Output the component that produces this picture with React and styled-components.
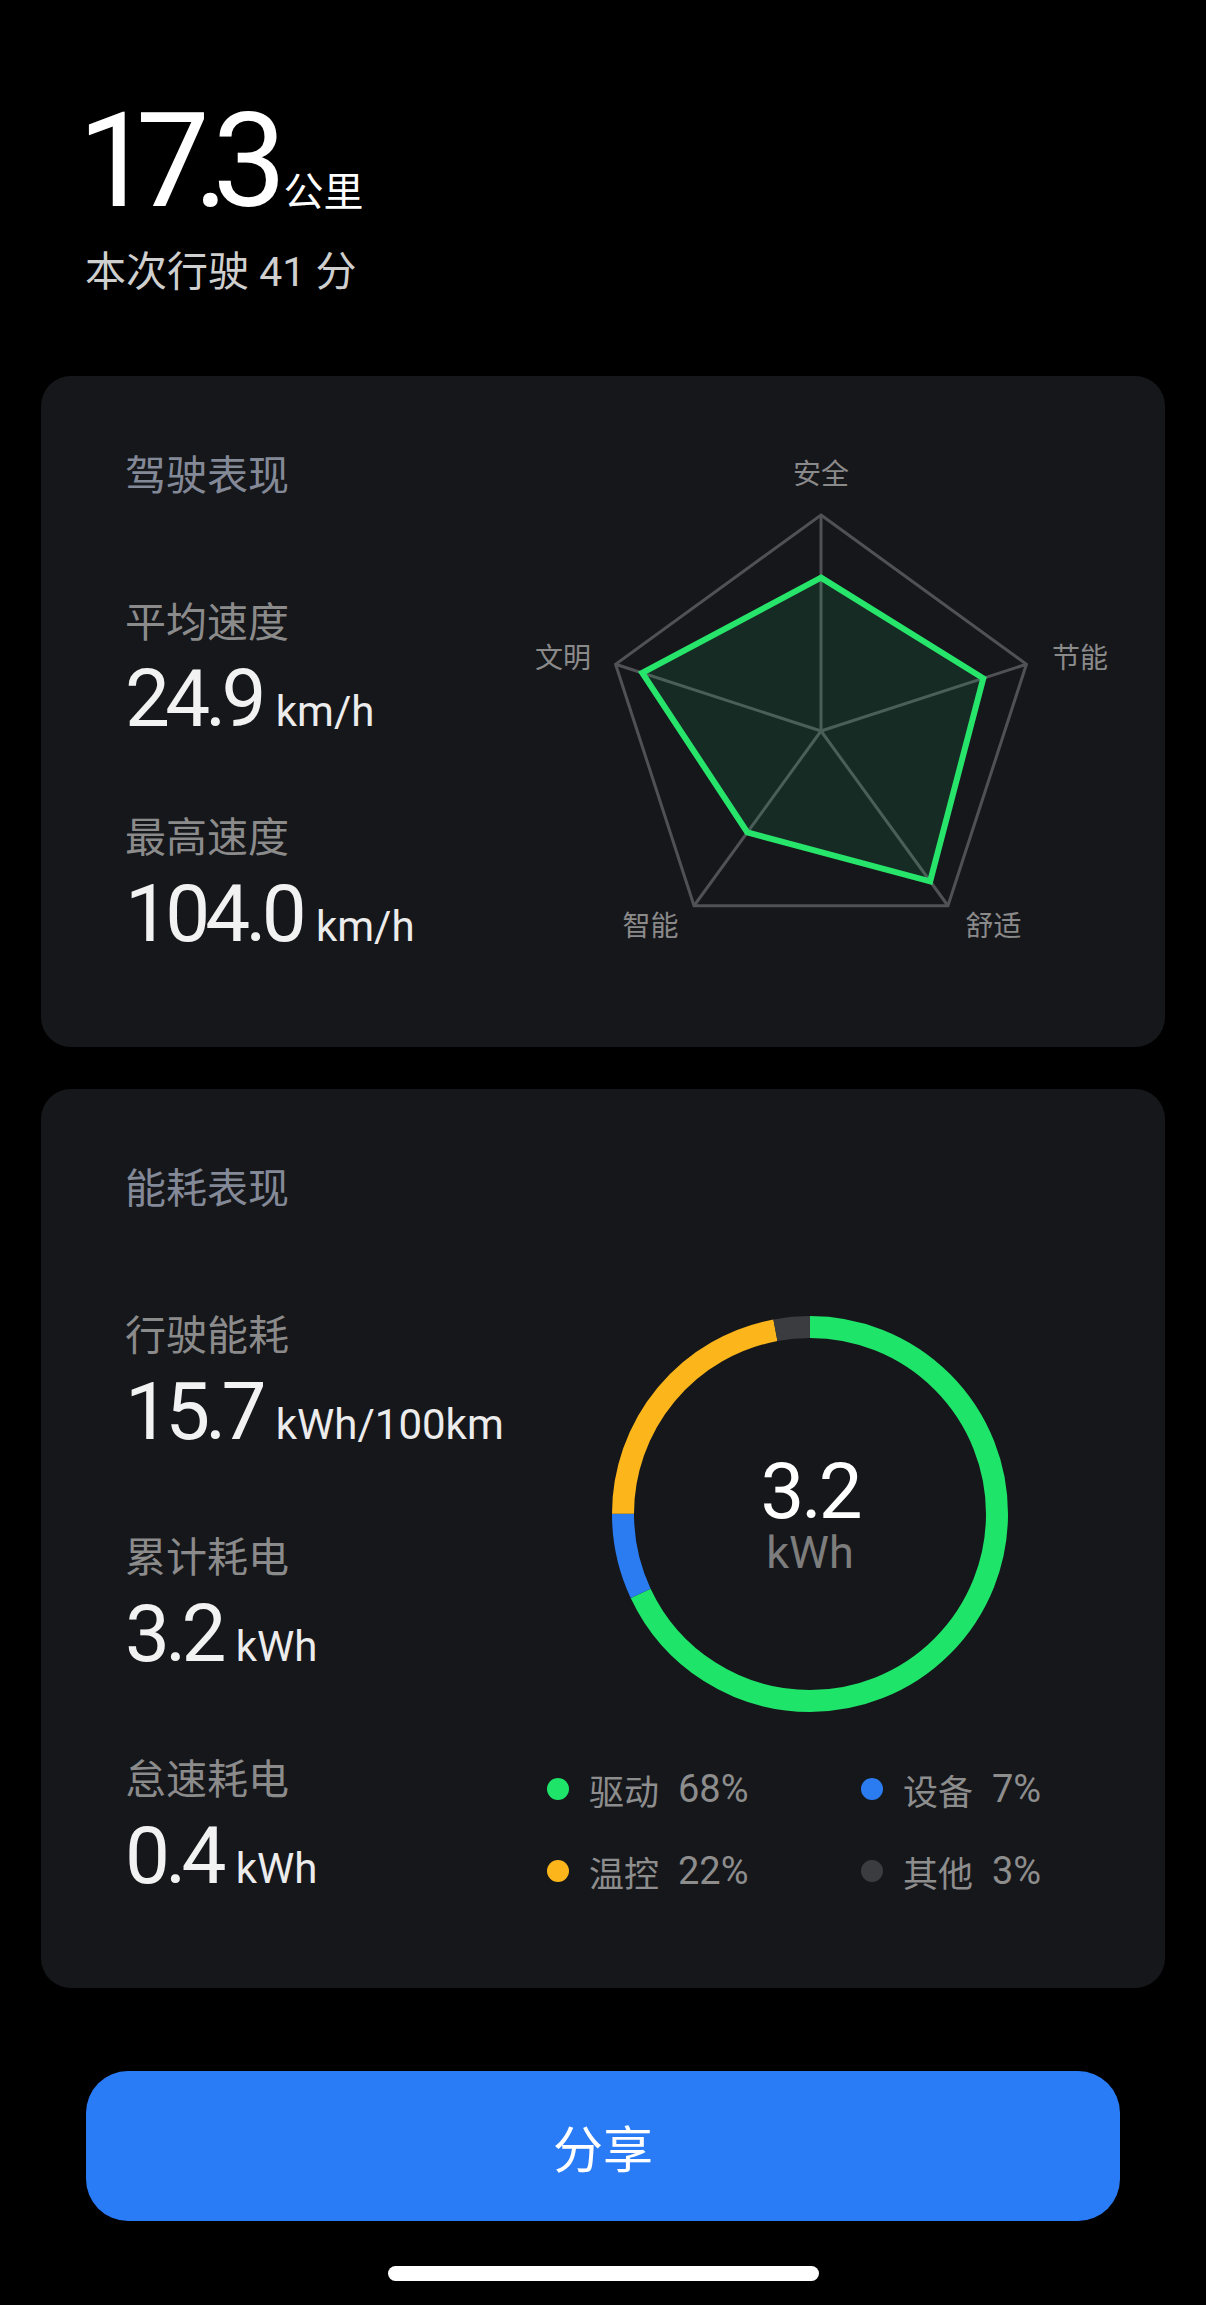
import React from 'react';
import styled, { createGlobalStyle } from 'styled-components';

const GlobalStyle = createGlobalStyle`
  html, body { margin: 0; padding: 0; background: #000; }
  body {
    font-family: Roboto, "Noto Sans CJK SC", sans-serif;
    -webkit-font-smoothing: antialiased;
  }
`;

const Page = styled.div`
  width: 1206px;
  min-height: 2305px;
  box-sizing: border-box;
  padding: 96px 41px 0;
  background: #000;
  display: flex;
  flex-direction: column;
`;

const Header = styled.header`
  padding-left: 44px;
  display: flex;
  flex-direction: column;
`;

const DistanceRow = styled.div`
  display: flex;
  align-items: baseline;
  color: #fff;
`;

const Distance = styled.span`
  font-size: 131px;
  line-height: 131px;
  letter-spacing: -0.12em;
  margin-left: -7px;
`;

const DistanceUnit = styled.span`
  font-size: 40px;
  line-height: 1;
  margin-left: 13px;
`;

const Duration = styled.div`
  margin-top: 21px;
  font-size: 41px;
  line-height: 48px;
  color: #cfcfcf;
`;

const Card = styled.section`
  margin-top: ${p => p.$top}px;
  background: #16171b;
  border-radius: 30px;
  display: grid;
  grid-template-columns: 459px 1fr;
  align-items: start;
`;

const StatsCol = styled.div`
  display: flex;
  flex-direction: column;
  padding: 76px 0 ${p => p.$bottom}px 84px;
`;

const CardTitle = styled.div`
  font-size: 41px;
  line-height: 48px;
  height: 48px;
  color: #848998;
  margin-bottom: 99px;
`;

const StatList = styled.div`
  display: flex;
  flex-direction: column;
  gap: ${p => p.$gap}px;
`;

const StatGroup = styled.div`
  display: flex;
  flex-direction: column;
`;

const StatLabel = styled.div`
  font-size: 41px;
  line-height: 48px;
  height: 48px;
  color: #8b8b8b;
  white-space: nowrap;
`;

const StatValue = styled.div`
  margin-top: 7px;
  font-size: 80px;
  line-height: 90px;
  height: 90px;
  letter-spacing: -0.06em;
  color: #f2f2f2;
  white-space: nowrap;
`;

const StatUnit = styled.span`
  font-size: 42px;
  line-height: 1;
  letter-spacing: 0;
  margin-left: 14px;
  color: #ececec;
`;

const ChartCol = styled.div`
  display: flex;
  flex-direction: column;
  padding-top: ${p => p.$top}px;
`;

const RadarSvg = styled.svg`
  display: block;
  width: 640px;
  height: 540px;
`;

const DonutSvg = styled.svg`
  display: block;
  width: 400px;
  height: 400px;
  margin-left: 110px;
`;

const Legend = styled.div`
  margin: 53px 0 0 47px;
  display: grid;
  grid-template-columns: 314px 220px;
  row-gap: 38px;
`;

const LegendItem = styled.div`
  display: flex;
  align-items: center;
  height: 44px;
  font-size: 35px;
  color: #8d8d8d;
  white-space: nowrap;
`;

const Dot = styled.span`
  width: 22px;
  height: 22px;
  border-radius: 50%;
  background: ${p => p.$color};
  margin-right: 20px;
  flex: none;
`;

const LegendPct = styled.span`
  margin-left: 19px;
  font-size: 38px;
`;

const ShareButton = styled.button`
  margin: 83px 45px 0;
  height: 150px;
  border: none;
  border-radius: 42px;
  background: #2a7cf6;
  color: #fff;
  font-family: Roboto, "Noto Sans CJK SC", sans-serif;
  font-size: 50px;
  cursor: pointer;
`;

const HomeBar = styled.div`
  align-self: center;
  margin-top: 45px;
  width: 431px;
  height: 15px;
  border-radius: 8px;
  background: #fff;
`;

const cx = 321, cy = 301, R = 216;
const axes = [
  { label: '安全', v: 0.71, lx: 321, ly: 54 },
  { label: '节能', v: 0.79, lx: 580, ly: 238 },
  { label: '舒适', v: 0.86, lx: 493.5, ly: 506 },
  { label: '智能', v: 0.58, lx: 150.5, ly: 506 },
  { label: '文明', v: 0.87, lx: 63, ly: 238 },
];
const pt = (i, r) => {
  const a = ((i * 72 - 90) * Math.PI) / 180;
  return [cx + r * Math.cos(a), cy + r * Math.sin(a)];
};
const poly = arr => arr.map(p => p.join(',')).join(' ');

function Radar() {
  const outer = axes.map((_, i) => pt(i, R));
  const data = axes.map((a, i) => pt(i, R * a.v));
  return (
    <RadarSvg viewBox="0 0 640 540">
      <polygon points={poly(outer)} fill="none" stroke="#505155" strokeWidth="3" />
      {outer.map((p, i) => (
        <line key={i} x1={cx} y1={cy} x2={p[0]} y2={p[1]} stroke="#505155" strokeWidth="3" />
      ))}
      <polygon points={poly(data)} fill="#22e06a" fillOpacity="0.1" stroke="#27e56b" strokeWidth="6" strokeLinejoin="miter" />
      {axes.map(a => (
        <text key={a.label} x={a.lx} y={a.ly} textAnchor="middle" fontSize="28" fill="#8a8a8a"
          fontFamily='Roboto, "Noto Sans CJK SC", sans-serif'>{a.label}</text>
      ))}
    </RadarSvg>
  );
}

const segments = [
  { color: '#1fe46a', pct: 68 },
  { color: '#2a7cf0', pct: 7 },
  { color: '#fcb61b', pct: 22 },
  { color: '#3b3c40', pct: 3 },
];

function Donut() {
  const r = 187;
  const C = 2 * Math.PI * r;
  let start = 0;
  return (
    <DonutSvg viewBox="0 0 400 400">
      <g transform="rotate(-90 200 200)">
        {segments.map(s => {
          const len = (s.pct / 100) * C;
          const el = (
            <circle key={s.color} cx="200" cy="200" r={r} fill="none" stroke={s.color} strokeWidth="22"
              strokeDasharray={`${len} ${C - len}`} strokeDashoffset={-start} />
          );
          start += len;
          return el;
        })}
      </g>
      <text x="200" y="204" textAnchor="middle" fontSize="78" fill="#fff" letterSpacing="-3"
        fontFamily="Roboto, sans-serif">3.2</text>
      <text x="200" y="254" textAnchor="middle" fontSize="45" fill="#7d7d7d"
        fontFamily="Roboto, sans-serif">kWh</text>
    </DonutSvg>
  );
}

function Stat({ label, value, unit }) {
  return (
    <StatGroup>
      <StatLabel>{label}</StatLabel>
      <StatValue>{value}<StatUnit>{unit}</StatUnit></StatValue>
    </StatGroup>
  );
}

const legend = [
  { name: '驱动', pct: '68%', color: '#1fe46a' },
  { name: '设备', pct: '7%', color: '#2a7cf0' },
  { name: '温控', pct: '22%', color: '#fcb61b' },
  { name: '其他', pct: '3%', color: '#3b3c40' },
];

export default function App() {
  return (
    <>
      <GlobalStyle />
      <Page>
        <Header>
          <DistanceRow>
            <Distance>17.3</Distance>
            <DistanceUnit>公里</DistanceUnit>
          </DistanceRow>
          <Duration>本次行驶 41 分</Duration>
        </Header>

        <Card $top={80}>
          <StatsCol $bottom={88}>
            <CardTitle>驾驶表现</CardTitle>
            <StatList $gap={70}>
              <Stat label="平均速度" value="24.9" unit="km/h" />
              <Stat label="最高速度" value="104.0" unit="km/h" />
            </StatList>
          </StatsCol>
          <ChartCol $top={54}>
            <Radar />
          </ChartCol>
        </Card>

        <Card $top={42}>
          <StatsCol $bottom={87}>
            <CardTitle>能耗表现</CardTitle>
            <StatList $gap={77}>
              <Stat label="行驶能耗" value="15.7" unit="kWh/100km" />
              <Stat label="累计耗电" value="3.2" unit="kWh" />
              <Stat label="怠速耗电" value="0.4" unit="kWh" />
            </StatList>
          </StatsCol>
          <ChartCol $top={225}>
            <Donut />
            <Legend>
              {legend.map(l => (
                <LegendItem key={l.name}>
                  <Dot $color={l.color} />
                  {l.name}
                  <LegendPct>{l.pct}</LegendPct>
                </LegendItem>
              ))}
            </Legend>
          </ChartCol>
        </Card>

        <ShareButton>分享</ShareButton>
        <HomeBar />
      </Page>
    </>
  );
}
